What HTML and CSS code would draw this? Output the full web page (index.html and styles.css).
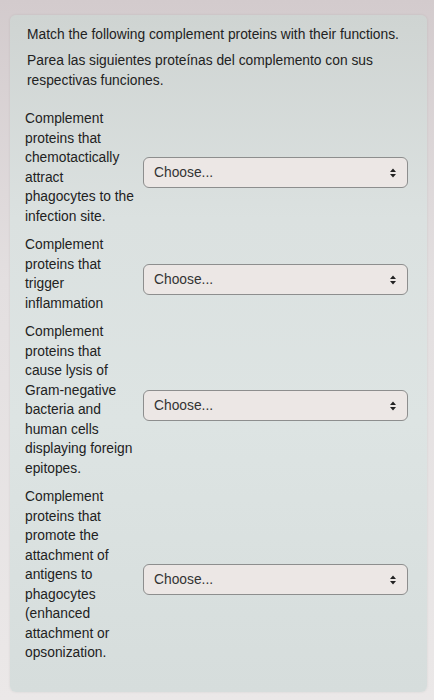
FILE: index.html
```html
<!DOCTYPE html>
<html lang="en">
<head>
    <meta charset="UTF-8">
    <meta name="viewport" content="width=device-width, initial-scale=1.0">
    <title>Match complement proteins</title>
    <link rel="stylesheet" href="styles.css">
</head>
<body>
    <div class="card">
        <div class="prompt">
            <p class="prompt-en">Match the following complement proteins with their functions.</p>
            <p>Parea las siguientes proteínas del complemento con sus respectivas funciones.</p>
        </div>

        <div class="match-list">
            <div class="match-row">
                <div class="match-label">Complement proteins that chemotactically attract phagocytes to the infection site.</div>
                <div class="select-wrap">
                    <select class="choose"><option>Choose...</option></select>
                    <svg class="select-arrow" width="8" height="10" viewBox="0 0 8 10"><path d="M4 0.5 L7 4 L1 4 Z M4 9.5 L7 6 L1 6 Z" fill="#222"/></svg>
                </div>
            </div>
            <div class="match-row">
                <div class="match-label">Complement proteins that trigger inflammation</div>
                <div class="select-wrap">
                    <select class="choose"><option>Choose...</option></select>
                    <svg class="select-arrow" width="8" height="10" viewBox="0 0 8 10"><path d="M4 0.5 L7 4 L1 4 Z M4 9.5 L7 6 L1 6 Z" fill="#222"/></svg>
                </div>
            </div>
            <div class="match-row">
                <div class="match-label">Complement proteins that cause lysis of <span class="nowrap">Gram-negative</span> bacteria and human cells displaying foreign epitopes.</div>
                <div class="select-wrap">
                    <select class="choose"><option>Choose...</option></select>
                    <svg class="select-arrow" width="8" height="10" viewBox="0 0 8 10"><path d="M4 0.5 L7 4 L1 4 Z M4 9.5 L7 6 L1 6 Z" fill="#222"/></svg>
                </div>
            </div>
            <div class="match-row">
                <div class="match-label">Complement proteins that promote the attachment of antigens to phagocytes (enhanced attachment or opsonization.</div>
                <div class="select-wrap">
                    <select class="choose"><option>Choose...</option></select>
                    <svg class="select-arrow" width="8" height="10" viewBox="0 0 8 10"><path d="M4 0.5 L7 4 L1 4 Z M4 9.5 L7 6 L1 6 Z" fill="#222"/></svg>
                </div>
            </div>
        </div>
    </div>
</body>
</html>
```

FILE: styles.css
```css
* {
    margin: 0;
    padding: 0;
    box-sizing: border-box;
}

body {
    background: linear-gradient(180deg, #d3cbcd 0%, #e3dfe0 40%, #ebe8e8 100%);
    font-family: "Liberation Sans", Arial, sans-serif;
    font-size: 13.8px;
    color: #222;
    min-height: 700px;
    padding: 15px 7px 8px 10px;
}

.card {
    background: linear-gradient(180deg, #cfd4d2 0%, #dbe1e0 30%, #dde4e3 60%, #d6dddc 100%);
    border-radius: 6px;
    padding: 10px 19px 20px 15px;
    min-height: 677px;
    box-shadow: 0 0 3px rgba(0, 0, 0, 0.08);
}

.prompt {
    padding-left: 2px;
    margin-bottom: 18px;
}

.prompt p {
    line-height: 20px;
}

.prompt-en {
    margin-bottom: 6px;
}

.match-list {
    display: flex;
    flex-direction: column;
    gap: 9px;
}

.match-row {
    display: grid;
    grid-template-columns: 118px 1fr;
    align-items: center;
}

.match-label {
    width: 112px;
    line-height: 19.5px;
}

.nowrap {
    white-space: nowrap;
}

.select-wrap {
    position: relative;
    margin-top: 10px;
}

.choose {
    appearance: none;
    -webkit-appearance: none;
    width: 100%;
    height: 31px;
    padding: 0 10px;
    border: 1px solid #8d8e8e;
    border-radius: 6px;
    background: #ece7e5;
    font-family: "Liberation Sans", Arial, sans-serif;
    font-size: 13.8px;
    color: #333;
}

.select-arrow {
    position: absolute;
    right: 11px;
    top: 11px;
    pointer-events: none;
}
```
